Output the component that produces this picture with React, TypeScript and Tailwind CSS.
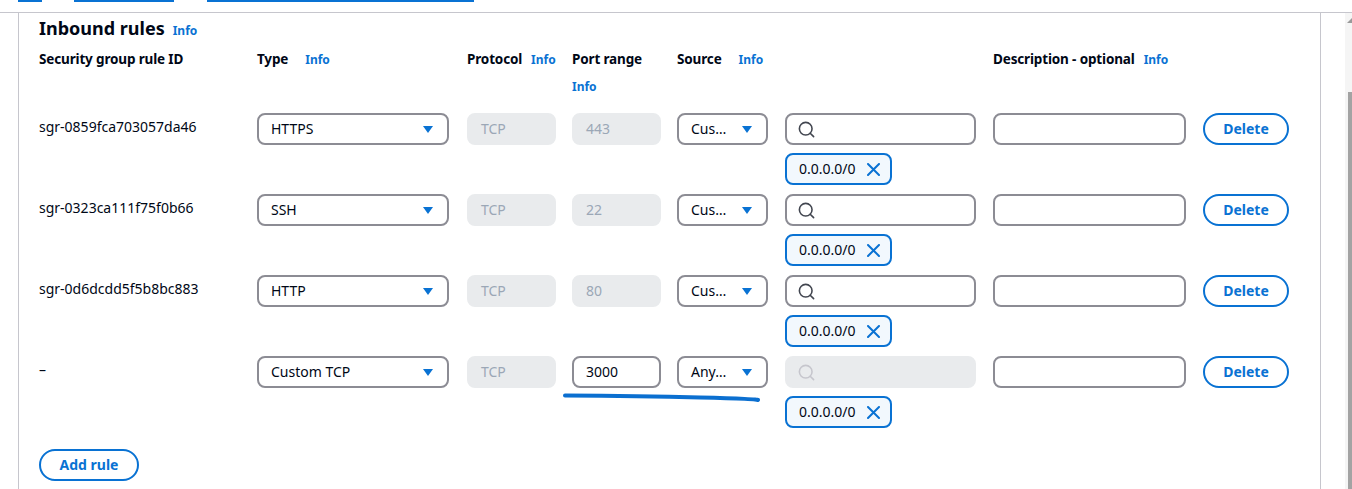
import { Search } from "lucide-react";

type Rule = {
  id: string;
  type: string;
  port: string;
  source: string;
  custom: boolean;
};

const rules: Rule[] = [
  { id: "sgr-0859fca703057da46", type: "HTTPS", port: "443", source: "Cus…", custom: false },
  { id: "sgr-0323ca111f75f0b66", type: "SSH", port: "22", source: "Cus…", custom: false },
  { id: "sgr-0d6dcdd5f5b8bc883", type: "HTTP", port: "80", source: "Cus…", custom: false },
  { id: "–", type: "Custom TCP", port: "3000", source: "Any…", custom: true },
];

const cols = "grid grid-cols-[218px_210px_105px_105px_108px_208px_210px_86px]";
const field = "flex h-8 items-center rounded-lg border-2 px-3 text-sm";
const fieldOn = "border-[#8c8c94] bg-white text-[#000716]";
const fieldOff = "border-[#e9ebed] bg-[#e9ebed] text-[#9ba7b6]";

function Info({ className = "" }: { className?: string }) {
  return <span className={`text-xs font-bold tracking-normal text-[#0972d3] ${className}`}>Info</span>;
}

function Caret() {
  return (
    <svg width="10" height="7" viewBox="0 0 10 7" aria-hidden="true" className="shrink-0">
      <path d="M0 0h10L5 7z" fill="#0972d3" />
    </svg>
  );
}

function Select({ value, width }: { value: string; width: string }) {
  return (
    <div className={`${field} ${fieldOn} ${width} justify-between pr-[14px]`}>
      <span>{value}</span>
      <Caret />
    </div>
  );
}

function Chip() {
  return (
    <div className="flex h-8 w-[107px] items-center rounded-lg border-2 border-[#0972d3] bg-[#f2f8fd] pl-3 text-sm text-[#000716]">
      <span className="w-[68px]">0.0.0.0/0</span>
      <svg width="13" height="13" viewBox="0 0 13 13" aria-hidden="true">
        <path d="M1 1l11 11M12 1L1 12" stroke="#0972d3" strokeWidth="2" strokeLinecap="round" fill="none" />
      </svg>
    </div>
  );
}

function Row({ rule }: { rule: Rule }) {
  return (
    <div className={`${cols} items-start`}>
      <div className="pt-[4px] text-sm text-[#000716]">{rule.id}</div>
      <Select value={rule.type} width="w-[192px]" />
      <div className={`${field} ${fieldOff} w-[89px]`}>TCP</div>
      <div className={`${field} w-[89px] ${rule.custom ? fieldOn : fieldOff}`}>{rule.port}</div>
      <Select value={rule.source} width="w-[91px]" />
      <div className="flex flex-col gap-2">
        <div className={`${field} w-[191px] pl-[10px] ${rule.custom ? fieldOff : fieldOn}`}>
          <Search size={19} strokeWidth={2} className={rule.custom ? "text-[#c6c6cd]" : "text-[#424650]"} />
        </div>
        <Chip />
      </div>
      <div className={`${field} ${fieldOn} w-[193px]`} />
      <button
        type="button"
        className="flex h-8 w-[86px] items-center justify-center rounded-full border-2 border-[#0972d3] bg-white text-sm font-bold text-[#0972d3]"
      >
        Delete
      </button>
    </div>
  );
}

export default function App() {
  return (
    <div className="relative h-[489px] w-full overflow-hidden bg-white font-['Noto_Sans',sans-serif]">
      <div className="flex h-[13px] items-start border-b border-[#c6c6cd]">
        <span className="ml-[18px] h-[2px] w-[24px] bg-[#0972d3]" />
        <span className="ml-[32px] h-[2px] w-[100px] bg-[#0972d3]" />
        <span className="ml-[33px] h-[2px] w-[267px] bg-[#0972d3]" />
      </div>

      <div className="flex h-[476px]">
        <div className="ml-[18px] h-full w-[1303px] border-x border-[#c6c6cd] pl-5">
          <div className="flex items-baseline gap-2 pt-[1px]">
            <h2 className="text-lg font-bold text-[#000716]">Inbound rules</h2>
            <Info />
          </div>

          <div className={`${cols} mt-[7px] text-[13.5px] font-bold leading-5 tracking-[-0.15px] text-[#000716]`}>
            <div>Security group rule ID</div>
            <div className="flex items-baseline">
              Type <Info className="ml-[17px]" />
            </div>
            <div className="flex items-baseline">
              Protocol <Info className="ml-[9px]" />
            </div>
            <div className="flex flex-col">
              <span>Port range</span>
              <Info className="mt-[10px]" />
            </div>
            <div className="flex items-baseline">
              Source <Info className="ml-[17px]" />
            </div>
            <div />
            <div className="flex items-baseline">
              Description - optional <Info className="ml-[9px]" />
            </div>
          </div>

          <div className="mt-[18px] flex flex-col gap-[9px]">
            {rules.map((r) => (
              <Row key={r.id} rule={r} />
            ))}
          </div>

          <button
            type="button"
            className="mt-[21px] flex h-8 w-[100px] items-center justify-center rounded-full border-2 border-[#0972d3] bg-white text-sm font-bold text-[#0972d3]"
          >
            Add rule
          </button>
        </div>

        <div className="flex flex-1 justify-end">
          <div className="flex w-[7px] flex-col items-end bg-[#f5f5f5]">
            <svg width="5" height="5" viewBox="0 0 5 5" className="mt-[5px]" aria-hidden="true">
              <path d="M5 0v5H0z" fill="#9a9a9a" />
            </svg>
            <div className="mt-[69px] h-[400px] w-[4px] bg-[#a3a3a3]" />
          </div>
        </div>
      </div>

      {/* hand-drawn highlight under the port range + source fields */}
      <svg className="pointer-events-none absolute left-0 top-0" width="1352" height="489" aria-hidden="true">
        <path
          d="M565 395.5 Q640 396 700 397.5 T758 400"
          fill="none"
          stroke="#0b6fd0"
          strokeWidth="4"
          strokeLinecap="round"
        />
      </svg>
    </div>
  );
}
